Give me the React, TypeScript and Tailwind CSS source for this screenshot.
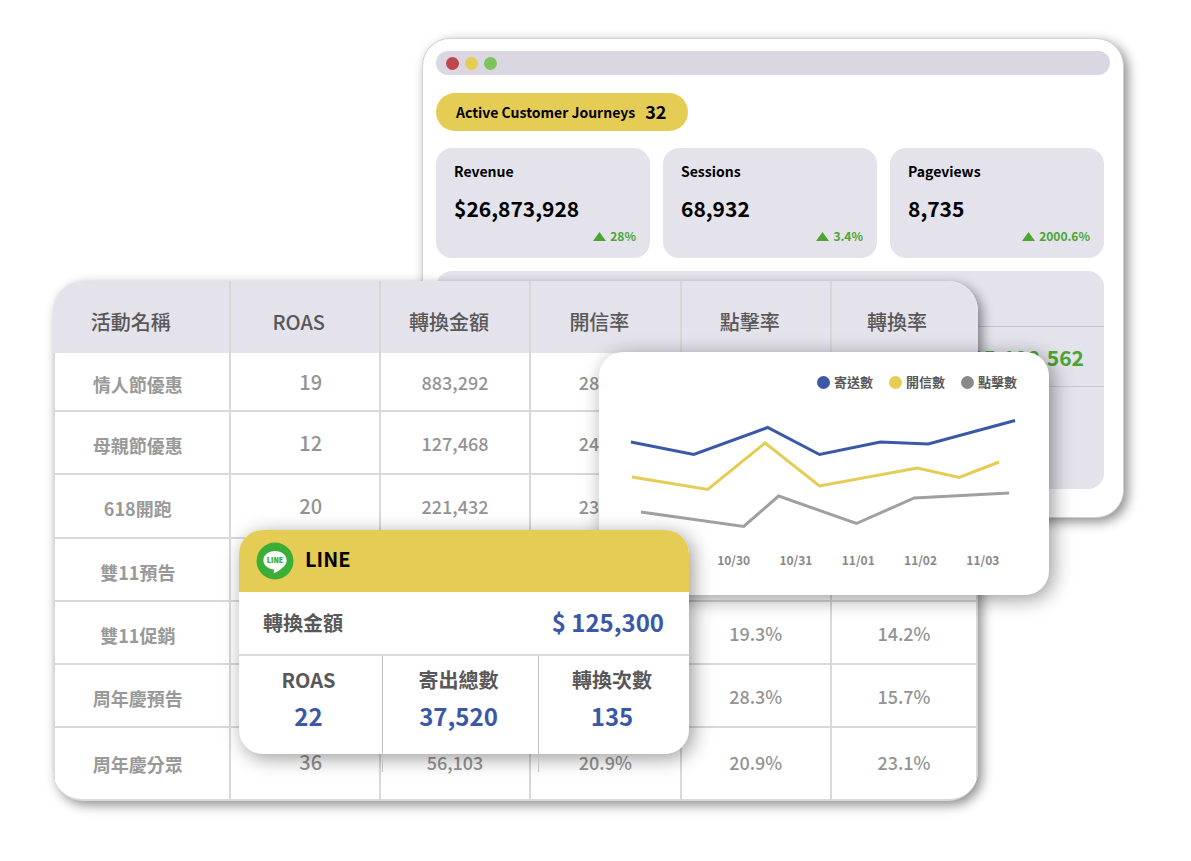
import React from "react";

const stats = [
  { label: "Revenue", value: "$26,873,928", change: "28%" },
  { label: "Sessions", value: "68,932", change: "3.4%" },
  { label: "Pageviews", value: "8,735", change: "2000.6%" },
];

const columns = ["活動名稱", "ROAS", "轉換金額", "開信率", "點擊率", "轉換率"];

const campaigns = [
  { height: "h-[59px]", cells: ["情人節優惠", "19", "883,292", "28.6%", "", ""] },
  { height: "h-[63px]", cells: ["母親節優惠", "12", "127,468", "24.1%", "", ""] },
  { height: "h-16", cells: ["618開跑", "20", "221,432", "23.5%", "", ""] },
  { height: "h-[63px]", cells: ["雙11預告", "", "", "", "", ""] },
  { height: "h-[63px]", cells: ["雙11促銷", "", "", "", "19.3%", "14.2%"] },
  { height: "h-[63px]", cells: ["周年慶預告", "", "", "", "28.3%", "15.7%"] },
  { height: "h-[71px]", cells: ["周年慶分眾", "36", "56,103", "20.9%", "20.9%", "23.1%"] },
];

const series = [
  {
    name: "寄送數",
    dot: "bg-[#3b57a7]",
    stroke: "#3b57a7",
    points: "32,90 95,102.5 169,75.5 221,102.5 282,90 330,92 417,68.5",
  },
  {
    name: "開信數",
    dot: "bg-[#e5cc54]",
    stroke: "#e5cc54",
    points: "33,125 109,137.5 166.5,91 221,134 319,116 361,125.5 401,110",
  },
  {
    name: "點擊數",
    dot: "bg-[#898989]",
    stroke: "#9fa0a0",
    points: "42,160 145,174.5 180,144 258,171.5 316,146 411,141",
  },
];

const dates = ["10/30", "10/31", "11/01", "11/02", "11/03"];

const lineStats = [
  { label: "ROAS", value: "22" },
  { label: "寄出總數", value: "37,520" },
  { label: "轉換次數", value: "135" },
];

const Triangle = () => (
  <svg viewBox="0 0 13 9" className="w-[13px] h-[9px]" aria-hidden="true">
    <path d="M6.5 0 13 9H0Z" fill="#4aa532" />
  </svg>
);

const LineLogo = () => (
  <svg viewBox="0 0 38 38" className="w-[38px] h-[38px]" aria-hidden="true">
    <circle cx="19" cy="19" r="18.5" fill="#3aae36" />
    <path
      d="M19 9C12.600 9 7.400 13.100 7.400 18.200c0 4.600 4.100 8.400 9.700 9.100.8.2 1 .6.9 1.200l-.2 2.200c0 .4.2.6.6.4 2.100-1 7.900-4.600 10.300-7.700 1.400-1.500 1.900-3.300 1.900-5.200C30.600 13.100 25.400 9 19 9Z"
      fill="#fff"
    />
    <text
      x="19"
      y="21"
      textAnchor="middle"
      fontSize="7"
      fontWeight="900"
      fill="#3aae36"
      stroke="#3aae36"
      strokeWidth="0.2"
    >
      LINE
    </text>
  </svg>
);

const DashboardWindow = () => {
  return (
    <section className="col-start-4 col-end-9 row-start-1 mt-[38px] h-[480px] flex flex-col rounded-[28px] border border-[#d0d0d0] bg-white px-[13px] pt-3 pb-7 shadow-[4px_4px_12px_rgba(0,0,0,0.45)]">
      <div className="flex h-6 items-center gap-[6px] rounded-full bg-[#dad7e2] px-[10px]">
        <span className="size-[13px] rounded-full bg-[#bd474b]" />
        <span className="size-[13px] rounded-full bg-[#e5cc54]" />
        <span className="size-[13px] rounded-full bg-[#7fc35c]" />
      </div>
      <div className="flex flex-1 flex-col pr-[6px]">
        <div className="mt-[18px] flex h-[38px] items-center gap-[10px] self-start rounded-full bg-[#e5cc54] pl-5 pr-[22px] text-black">
          <h2 className="text-sm font-bold">Active Customer Journeys</h2>
          <span className="pb-[2px] text-lg font-bold">32</span>
        </div>
        <div className="mt-[17px] grid grid-cols-3 gap-[13px]">
          {stats.map((stat) => (
            <div
              key={stat.label}
              className="h-[110px] rounded-2xl bg-[#e4e2eb] pl-[18px] pr-[14px] pt-3 text-black"
            >
              <h3 className="text-sm leading-[22px] font-bold">{stat.label}</h3>
              <p className="mt-3 text-[21px] leading-7 font-bold">{stat.value}</p>
              <p className="mt-[5px] flex items-center justify-end gap-1 text-xs leading-[18px] font-bold text-[#4aa532]">
                <Triangle />
                {stat.change}
              </p>
            </div>
          ))}
        </div>
        <div className="mt-[13px] flex-1 rounded-2xl bg-[#e4e2eb]">
          <div className="h-14 border-b border-[#c4c3c9]" />
          <div className="flex h-[60px] items-center justify-end border-b border-[#c9c8ce] pr-5 pt-[2px] text-[21px] font-bold text-[#4aa532]">
            $25,198,562
          </div>
        </div>
      </div>
    </section>
  );
};

const CampaignTable = () => {
  return (
    <section className="col-start-2 col-end-7 row-start-1 mt-[281px] self-start overflow-hidden rounded-[30px] bg-[#d9d9d9] pb-[2px] shadow-[4px_4px_12px_rgba(0,0,0,0.45)]">
      <div className="overflow-hidden rounded-[28px] bg-white">
        <table className="w-full table-fixed border-separate border-spacing-0">
          <thead>
            <tr className="h-[72px] bg-[#e4e2eb]">
              {columns.map((name) => (
                <th
                  key={name}
                  scope="col"
                  className="border-r-2 border-[#d8d8da] pt-[10px] pr-3 text-xl font-medium text-[#595757] first:w-[19.2%] first:pr-5 last:w-[15.8%] last:border-r-0 last:pr-4"
                >
                  {name}
                </th>
              ))}
            </tr>
          </thead>
          <tbody>
            {campaigns.map((row) => (
              <tr key={row.cells[0]} className={`${row.height} group`}>
                {row.cells.map((cell, i) => (
                  <td
                    key={i}
                    className="border-r-2 border-b-2 border-[#d9d9d9] text-center text-lg font-medium text-[#939393] first:border-l-2 first:pt-1 first:pr-2 first:font-bold first:text-[#999] nth-[2]:pl-3 nth-[2]:text-xl group-last:border-b-0 group-last:pb-1"
                  >
                    {cell}
                  </td>
                ))}
              </tr>
            ))}
          </tbody>
        </table>
      </div>
    </section>
  );
};

const TrendCard = () => {
  return (
    <section className="relative col-start-5 col-end-8 row-start-1 mt-[352px] h-[243px] self-start rounded-[24px] bg-white shadow-[4px_4px_20px_rgba(0,0,0,0.4)]">
      <ul className="flex justify-end gap-4 pt-5 pr-8 text-[13px] leading-5 font-bold text-[#595757]">
        {series.map((s) => (
          <li key={s.name} className="flex items-center gap-1">
            <span className={`size-[13px] rounded-full ${s.dot}`} />
            {s.name}
          </li>
        ))}
      </ul>
      <svg
        viewBox="0 40 451 150"
        preserveAspectRatio="none"
        className="block h-[150px] w-full"
        role="img"
        aria-label="寄送數 開信數 點擊數"
      >
        {series.map((s) => (
          <polyline
            key={s.name}
            points={s.points}
            fill="none"
            stroke={s.stroke}
            strokeWidth="3"
          />
        ))}
      </svg>
      <div className="mt-2 ml-[23%] grid grid-cols-5 pr-[35px] text-center text-xs leading-5 font-bold text-[#898989]">
        {dates.map((date) => (
          <span key={date}>{date}</span>
        ))}
      </div>
    </section>
  );
};

const LineCard = () => {
  return (
    <section className="relative col-start-3 col-end-6 row-start-1 mt-[530px] self-start rounded-[24px] bg-white shadow-[4px_4px_20px_rgba(0,0,0,0.4)]">
      <header className="flex h-[62px] items-center gap-[11px] rounded-t-[24px] bg-[#e5cc54] pl-[17px]">
        <LineLogo />
        <h2 className="pb-1 text-xl font-bold text-black">LINE</h2>
      </header>
      <div className="flex h-16 items-center justify-between border-b-2 border-[#dcdcdc] pl-6 pr-[25px]">
        <h3 className="text-xl font-bold text-[#595757]">轉換金額</h3>
        <p className="pb-[2px] text-2xl font-bold text-[#3b57a7]">$ 125,300</p>
      </div>
      <dl className="grid h-[98px] grid-cols-[144fr_156fr_150fr]">
        {lineStats.map((stat) => (
          <div
            key={stat.label}
            className="h-[116px] border-r border-[#c0c2c3] pt-[10px] pr-1 text-center last:border-r-0"
          >
            <dt className="text-xl leading-7 font-bold text-[#595757]">{stat.label}</dt>
            <dd className="mt-1 text-2xl leading-9 font-bold text-[#3b57a7]">{stat.value}</dd>
          </div>
        ))}
      </dl>
    </section>
  );
};

const App = () => {
  return (
    <main className="grid min-h-screen grid-cols-[53fr_186fr_183fr_177fr_90fr_289fr_71fr_75fr_67fr] items-start bg-white pb-[58px] font-['Noto_Sans_CJK_TC','Noto_Sans',sans-serif]">
      <DashboardWindow />
      <CampaignTable />
      <TrendCard />
      <LineCard />
    </main>
  );
};

export default App;
